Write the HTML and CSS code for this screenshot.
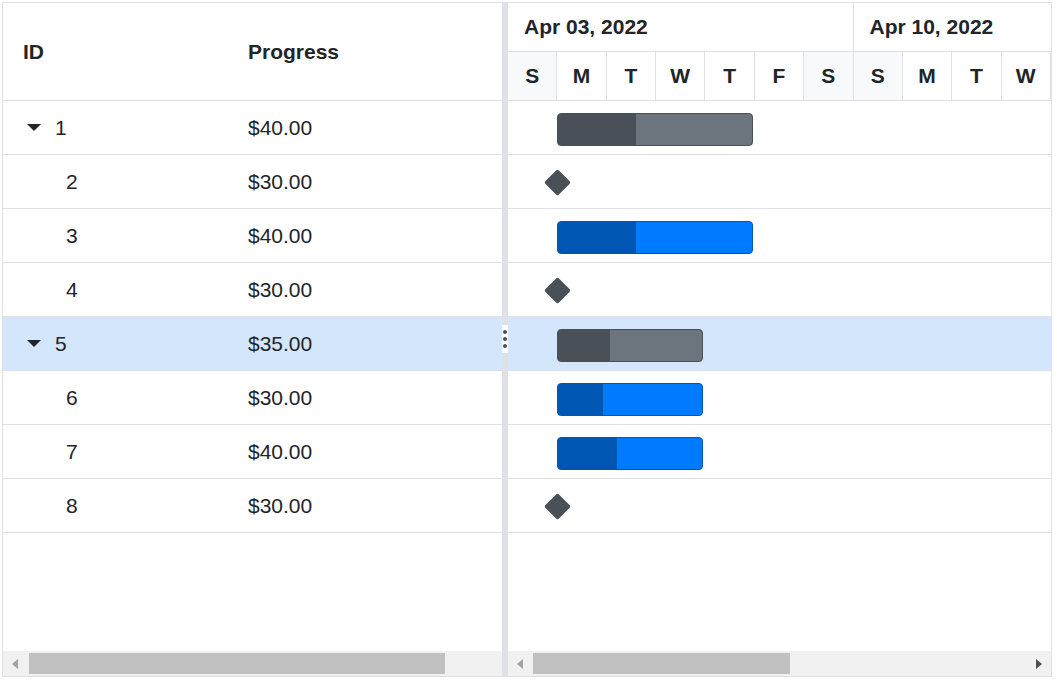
FILE: index.html
```html
<!DOCTYPE html>
<html>
<head>
<meta charset="utf-8">
<link rel="stylesheet" href="styles.css">
</head>
<body>
<div class="gantt">
  <div class="pane grid-pane">
    <div class="grid-header">
      <div class="col-id">ID</div>
      <div class="col-progress">Progress</div>
    </div>
    <div class="grid-body">
      <div class="grid-row"><div class="col-id"><span class="caret"></span><span>1</span></div><div class="col-progress">$40.00</div></div>
      <div class="grid-row"><div class="col-id child">2</div><div class="col-progress">$30.00</div></div>
      <div class="grid-row"><div class="col-id child">3</div><div class="col-progress">$40.00</div></div>
      <div class="grid-row"><div class="col-id child">4</div><div class="col-progress">$30.00</div></div>
      <div class="grid-row selected"><div class="col-id"><span class="caret"></span><span>5</span></div><div class="col-progress">$35.00</div></div>
      <div class="grid-row"><div class="col-id child">6</div><div class="col-progress">$30.00</div></div>
      <div class="grid-row"><div class="col-id child">7</div><div class="col-progress">$40.00</div></div>
      <div class="grid-row"><div class="col-id child">8</div><div class="col-progress">$30.00</div></div>
    </div>
    <div class="filler"></div>
    <div class="hscroll">
      <div class="scroll-btn"><span class="arrow-left"></span></div>
      <div class="track"><div class="thumb" style="margin-left:2px;width:416px"></div></div>
    </div>
  </div>
  <div class="splitter">
    <div class="handle"><i></i><i></i><i></i></div>
  </div>
  <div class="pane chart-pane">
    <div class="chart-header">
      <div class="tier tier-top">
        <div class="week">Apr 03, 2022</div>
        <div class="week">Apr 10, 2022</div>
      </div>
      <div class="tier tier-days">
        <div class="day weekend">S</div>
        <div class="day">M</div>
        <div class="day">T</div>
        <div class="day">W</div>
        <div class="day">T</div>
        <div class="day">F</div>
        <div class="day weekend">S</div>
        <div class="day weekend">S</div>
        <div class="day">M</div>
        <div class="day">T</div>
        <div class="day">W</div>
      </div>
    </div>
    <div class="chart-body">
      <div class="chart-row"><div class="bar bar-parent" style="margin-left:49px;width:196px"><div class="fill" style="width:40%"></div></div></div>
      <div class="chart-row"><div class="milestone" style="margin-left:40px"></div></div>
      <div class="chart-row"><div class="bar bar-child" style="margin-left:49px;width:196px"><div class="fill" style="width:40%"></div></div></div>
      <div class="chart-row"><div class="milestone" style="margin-left:40px"></div></div>
      <div class="chart-row selected"><div class="bar bar-parent" style="margin-left:49px;width:146px"><div class="fill" style="width:36%"></div></div></div>
      <div class="chart-row"><div class="bar bar-child" style="margin-left:49px;width:146px"><div class="fill" style="width:31%"></div></div></div>
      <div class="chart-row"><div class="bar bar-child" style="margin-left:49px;width:146px"><div class="fill" style="width:41%"></div></div></div>
      <div class="chart-row"><div class="milestone" style="margin-left:40px"></div></div>
    </div>
    <div class="filler"></div>
    <div class="hscroll">
      <div class="scroll-btn"><span class="arrow-left"></span></div>
      <div class="track"><div class="thumb" style="margin-left:1px;width:257px"></div></div>
      <div class="scroll-btn"><span class="arrow-right"></span></div>
    </div>
  </div>
</div>
</body>
</html>
```
FILE: styles.css
```css
html, body {
  margin: 0;
  padding: 0;
  background: #fff;
}
body {
  font-family: "Liberation Sans", Arial, sans-serif;
  color: #212529;
}
.gantt {
  margin: 2px;
  width: 1050px;
  height: 675px;
  box-sizing: border-box;
  border: 1px solid #dee2e6;
  display: flex;
  overflow: hidden;
}
.pane {
  display: flex;
  flex-direction: column;
  overflow: hidden;
}
.grid-pane {
  width: 499px;
  flex: none;
}
.splitter {
  width: 6px;
  flex: none;
  background: #dee2e6;
  position: relative;
}
.handle {
  position: absolute;
  left: 0;
  top: 322px;
  width: 6px;
  height: 28px;
  box-sizing: border-box;
  padding: 5px 0;
  background: #fff;
  display: flex;
  flex-direction: column;
  align-items: center;
  gap: 3px;
}
.handle i {
  display: block;
  width: 4px;
  height: 4px;
  border-radius: 50%;
  background: #495057;
}
.chart-pane {
  flex: 1;
  min-width: 0;
}

/* grid */
.grid-header {
  height: 98px;
  flex: none;
  box-sizing: border-box;
  border-bottom: 1px solid #dee2e6;
  display: flex;
  align-items: center;
  font-weight: bold;
  font-size: 21px;
}
.col-id {
  width: 245px;
  flex: none;
  box-sizing: border-box;
  padding-left: 20px;
  display: flex;
  align-items: center;
}
.col-progress {
  flex: 1;
}
.grid-row {
  height: 54px;
  box-sizing: border-box;
  border-bottom: 1px solid #dee2e6;
  display: flex;
  align-items: center;
  font-size: 21px;
}
.grid-row .col-id {
  padding-left: 24px;
}
.grid-row .col-id.child {
  padding-left: 63px;
}
.caret {
  width: 0;
  height: 0;
  border-left: 7px solid transparent;
  border-right: 7px solid transparent;
  border-top: 7px solid #212529;
  margin-right: 14px;
}
.selected {
  background: #d4e6fc;
}
.filler {
  flex: 1;
}

/* scrollbars */
.hscroll {
  height: 25px;
  flex: none;
  display: flex;
  background: #f1f1f1;
}
.scroll-btn {
  width: 24px;
  flex: none;
  display: flex;
  align-items: center;
  justify-content: center;
}
.arrow-left {
  width: 0;
  height: 0;
  border-top: 5.5px solid transparent;
  border-bottom: 5.5px solid transparent;
  border-right: 6px solid #a3a3a3;
}
.arrow-right {
  width: 0;
  height: 0;
  border-top: 5.5px solid transparent;
  border-bottom: 5.5px solid transparent;
  border-left: 6px solid #505050;
}
.track {
  flex: 1;
  display: flex;
  align-items: center;
}
.thumb {
  height: 21px;
  background: #c1c1c1;
}

/* chart */
.chart-header {
  flex: none;
}
.tier {
  height: 49px;
  box-sizing: border-box;
  border-bottom: 1px solid #dee2e6;
  display: flex;
  font-weight: bold;
  font-size: 21px;
}
.week {
  flex: none;
  width: 345.5px;
  box-sizing: border-box;
  border-right: 1px solid #dee2e6;
  padding-left: 16px;
  display: flex;
  align-items: center;
}
.day {
  flex: none;
  width: 49.36px;
  box-sizing: border-box;
  border-right: 1px solid #dee2e6;
  display: flex;
  align-items: center;
  justify-content: center;
}
.day.weekend {
  background: #f8f9fa;
}
.chart-row {
  height: 54px;
  box-sizing: border-box;
  border-bottom: 1px solid #dee2e6;
  display: flex;
  align-items: flex-start;
}
.bar {
  flex: none;
  margin-top: 12px;
  height: 33px;
  box-sizing: border-box;
  border: 1px solid;
  border-radius: 4px;
  overflow: hidden;
  display: flex;
}
.bar-parent {
  background: #6c757d;
  border-color: #495057;
}
.bar-parent .fill {
  background: #495057;
}
.bar-child {
  background: #007bff;
  border-color: #0056b3;
}
.bar-child .fill {
  background: #0056b3;
}
.milestone {
  flex: none;
  width: 19px;
  height: 19px;
  margin-top: 18px;
  background: #495057;
  border-radius: 2px;
  transform: rotate(45deg);
}
```
